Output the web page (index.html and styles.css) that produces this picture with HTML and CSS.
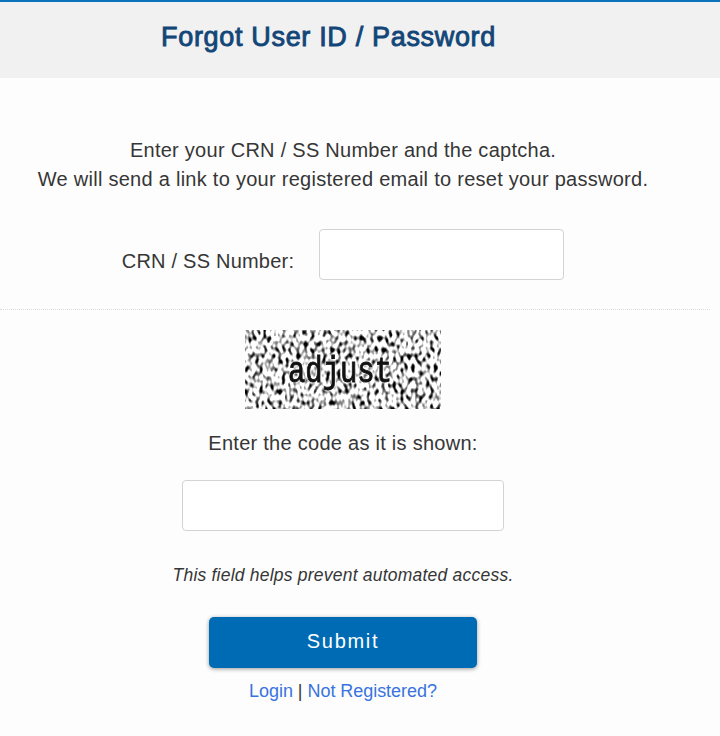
FILE: index.html
```html
<!DOCTYPE html>
<html lang="en">
<head>
<meta charset="utf-8">
<title>Forgot User ID / Password</title>
<link rel="stylesheet" href="styles.css">
</head>
<body>
<header class="header"><h1 class="title">Forgot User ID / Password</h1></header>
<main class="content">
  <p class="intro">Enter your CRN / SS Number and the captcha.<br>We will send a link to your registered email to reset your password.</p>
  <form class="form">
    <div class="number-row">
      <label class="number-label" for="crn">CRN / SS Number:</label>
      <input class="field number-field" id="crn" type="text">
    </div>
    <div class="divider"></div>
    <svg class="captcha" width="196" height="79" viewBox="0 0 196 79" role="img" aria-label="Captcha">
      <defs>
        <filter id="noise" x="0" y="0" width="100%" height="100%" color-interpolation-filters="sRGB">
          <feTurbulence type="fractalNoise" baseFrequency="0.27 0.17" numOctaves="1" seed="21"/>
          <feColorMatrix type="matrix" values="4 0.6 0 0 -1.45  4 0.6 0 0 -1.45  4 0.6 0 0 -1.45  0 0 0 0 1"/>
        </filter>
      </defs>
      <rect width="196" height="79" filter="url(#noise)"/>
      <text class="captcha-text" x="43" y="52" textLength="104" lengthAdjust="spacingAndGlyphs">adjust</text>
    </svg>
    <label class="code-label" for="code">Enter the code as it is shown:</label>
    <input class="field code-field" id="code" type="text">
    <p class="hint">This field helps prevent automated access.</p>
    <button class="submit" type="button">Submit</button>
    <nav class="links"><a href="#">Login</a> | <a href="#">Not Registered?</a></nav>
  </form>
</main>
</body>
</html>
```
FILE: styles.css
```css
* { box-sizing: border-box; }
body {
  margin: 0;
  height: 736px;
  overflow: hidden;
  background: #fdfdfd;
  color: #363636;
  font: 20px/29px "Liberation Sans", Arial, sans-serif;
  letter-spacing: 0.27px;
}
.header {
  height: 78px;
  padding: 18px 63px 0 0;
  border-top: 2px solid #0a72bb;
  background: #f1f1f1;
  text-align: center;
}
.title {
  margin: 0;
  color: #134678;
  font-size: 27px;
  font-weight: 400;
  line-height: 34px;
  letter-spacing: 0.67px;
  white-space: nowrap;
  -webkit-text-stroke: 0.9px #134678;
}
.content { width: 686px; }
.intro {
  margin: 0;
  padding-top: 58px;
  text-align: center;
  white-space: nowrap;
}
.form {
  display: flex;
  flex-direction: column;
  align-items: center;
}
.number-row {
  display: flex;
  align-items: center;
  gap: 25px;
  margin-top: 35px;
}
.number-label { padding-top: 13px; white-space: nowrap; letter-spacing: 0.22px; }
.field {
  height: 51px;
  padding: 0 12px;
  border: 1px solid #d3d3d3;
  border-radius: 4px;
  background: #fff;
  font: inherit;
}
.number-field { width: 245px; }
.divider {
  align-self: flex-start;
  width: 710px;
  margin-top: 29px;
  border-top: 1px dotted #ddd;
}
.captcha { display: block; margin-top: 20px; }
.captcha-text {
  fill: #111;
  stroke: #111;
  stroke-width: 0.9px;
  filter: drop-shadow(0 0 1px #fff) drop-shadow(0 0 1px #fff);
  font: 36px "Liberation Mono", monospace;
  letter-spacing: 0;
}
.code-label { margin-top: 20px; }
.code-field { width: 322px; margin-top: 22px; }
.hint {
  margin: 30px 0 0;
  font-size: 17.5px;
  font-style: italic;
  letter-spacing: 0.22px;
}
.submit {
  width: 268px;
  height: 51px;
  margin-top: 27px;
  padding: 0 0 2px;
  border: 0;
  border-radius: 5px;
  background: #006bb5;
  box-shadow: 0 1px 4px rgba(0, 0, 0, 0.4);
  color: #fff;
  font: inherit;
  letter-spacing: 1.7px;
}
.links { margin-top: 9px; font-size: 18px; letter-spacing: -0.04px; }
.links a { color: #3873df; text-decoration: none; }
```
